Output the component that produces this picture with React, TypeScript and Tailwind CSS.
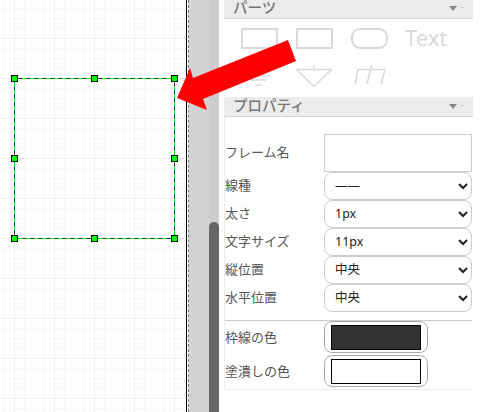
const font = "font-['Noto_Sans_CJK_JP','Noto_Sans',sans-serif]"

function PanelHeader({ title, first }: { title: string; first?: boolean }) {
  return (
    <div
      className={`flex h-[20px] items-center justify-between border-b border-[#d4d4d4] bg-[#ececec] pl-[9px] pr-[10px] ${first ? '-mt-px' : ''}`}
    >
      <span className="-mt-[2px] text-[14.5px] font-medium leading-none text-[#777777]">{title}</span>
      <span className="flex items-center gap-[5px]">
        <svg width="8" height="5" viewBox="0 0 8 5" aria-hidden="true">
          <path d="M0 0h8L4 5z" fill="#888888" />
        </svg>
        <span className="mb-[3px] h-px w-px bg-[#999999]" />
      </span>
    </div>
  )
}

function Parts() {
  const stroke = '#d9d9d9'
  return (
    <div className="h-[78px] pl-[17px] pt-[8px]">
      <div className="flex h-[22px] items-center gap-[18px]">
        <div className="h-[21px] w-[37px] border-2 border-[#d9d9d9]" />
        <div className="h-[21px] w-[37px] border-2 border-[#d9d9d9]" />
        <div className="h-[21px] w-[37px] rounded-[9px] border-2 border-[#d9d9d9]" />
        <span className="-mt-[2px] -ml-px font-['Noto_Sans',sans-serif] text-[22px] leading-none text-[#d9d9d9]">Text</span>
      </div>
      <div className="mt-[16px] flex items-start gap-[18px]">
        <svg width="37" height="27" viewBox="0 0 37 27" aria-hidden="true">
          <path d="M6 11h23M10 15h15M14.5 20h6" stroke={stroke} strokeWidth="1.5" fill="none" />
        </svg>
        <svg width="37" height="27" viewBox="0 0 37 27" aria-hidden="true">
          <path d="M18 0v4.5M0.5 4.5h35L18 21.5z" stroke={stroke} strokeWidth="1.5" fill="none" />
        </svg>
        <svg width="37" height="27" viewBox="0 0 37 27" aria-hidden="true">
          <path d="M7 4.5h27M7 4.5L4 19M20.7 0L16 19M34 4.5L30 19" stroke={stroke} strokeWidth="1.5" fill="none" />
        </svg>
      </div>
    </div>
  )
}

function SelectRow({ label, value, options }: { label: string; value: string; options: string[] }) {
  return (
    <div className="flex h-[28px] items-center">
      <label className="-mt-[2px] w-[99px] text-[13px] text-[#555555]">{label}</label>
      <select
        defaultValue={value}
        className="h-[27.5px] w-[148px] rounded-lg border border-[#cccccc] bg-white pb-[2px] pl-[6px] font-['Noto_Sans','Noto_Sans_CJK_JP',sans-serif] text-[12.5px] text-[#222222]"
      >
        {options.map((o) => (
          <option key={o}>{o}</option>
        ))}
      </select>
    </div>
  )
}

function ColorRow({ label, value }: { label: string; value: string }) {
  return (
    <div className="flex h-[34px] items-start">
      <label className="mt-[6px] w-[99px] text-[13px] text-[#555555]">{label}</label>
      <input
        type="color"
        defaultValue={value}
        className="h-[32px] w-[104px] rounded-lg border border-[#aaaaaa] bg-white px-[6px] pb-[2px] pt-[3px] [&::-webkit-color-swatch]:rounded-none [&::-webkit-color-swatch]:border [&::-webkit-color-swatch]:border-black [&::-webkit-color-swatch-wrapper]:p-0"
      />
    </div>
  )
}

export default function App() {
  return (
    <div className={`flex h-[412px] w-[481px] overflow-hidden bg-white ${font}`}>
      <div className="relative h-full w-[186px] shrink-0 bg-white bg-[linear-gradient(#efefef_1px,transparent_1px),linear-gradient(90deg,#efefef_1px,transparent_1px),linear-gradient(#f8f8f8_1px,transparent_1px),linear-gradient(90deg,#f8f8f8_1px,transparent_1px)] bg-[length:40px_40px,40px_40px,10px_10px,10px_10px] bg-[position:14px_38px,14px_38px,4px_8px,4px_8px]">
        <svg className="absolute left-[10px] top-[74px]" width="170" height="170" viewBox="0 0 170 170" aria-hidden="true">
          <rect x="4.5" y="4.5" width="160" height="160" fill="none" stroke="#333333" />
          <rect x="4.5" y="4.5" width="160" height="160" fill="none" stroke="#00ff00" strokeDasharray="4 4" />
          {[
            [4, 4],
            [84, 4],
            [164, 4],
            [4, 84],
            [164, 84],
            [4, 164],
            [84, 164],
            [164, 164],
          ].map(([x, y]) => (
            <rect key={`${x}-${y}`} x={x - 2.5} y={y - 2.5} width="6" height="6" fill="#00ff00" stroke="#000000" />
          ))}
        </svg>
      </div>
      <div className="h-full w-px shrink-0 bg-black" />
      <div className="h-full w-[2px] shrink-0 border-r border-dashed border-[#777777] bg-white" />
      <div className="h-full w-[20px] shrink-0 bg-[#d3d3d3]" />
      <div className="relative h-full w-[10px] shrink-0 bg-[#cccccc]">
        <div className="absolute bottom-0 left-0 right-0 top-[222px] rounded-t-[5px] bg-[#666666]" />
      </div>
      <div className="w-[5px] shrink-0 bg-white" />
      <div className="h-full w-[249px] shrink-0">
        <PanelHeader title="パーツ" first />
        <Parts />
        <PanelHeader title="プロパティ" />
        <div className="w-[248px] border-b border-l border-[#ececec] pt-[17px]">
          <div className="flex h-[38px] items-center">
            <label className="-mt-[2px] w-[99px] text-[13px] text-[#555555]">フレーム名</label>
            <input className="h-[38px] w-[148px] border border-[#cccccc] bg-white" />
          </div>
          <SelectRow label="線種" value="——" options={['——', '- - -']} />
          <SelectRow label="太さ" value="1px" options={['1px', '2px']} />
          <SelectRow label="文字サイズ" value="11px" options={['11px', '12px']} />
          <SelectRow label="縦位置" value="中央" options={['上', '中央', '下']} />
          <SelectRow label="水平位置" value="中央" options={['左', '中央', '右']} />
          <div className="mt-[8px] w-[247px] border-t border-[#cccccc]" />
          <ColorRow label="枠線の色" value="#333333" />
          <ColorRow label="塗潰しの色" value="#ffffff" />
        </div>
      </div>
      <svg className="absolute left-0 top-0" width="481" height="412" viewBox="0 0 481 412" aria-hidden="true">
        <polygon points="288,40 296,61 203,99 207,110 177,98 190,68 193,78" fill="#ff0000" />
      </svg>
    </div>
  )
}
